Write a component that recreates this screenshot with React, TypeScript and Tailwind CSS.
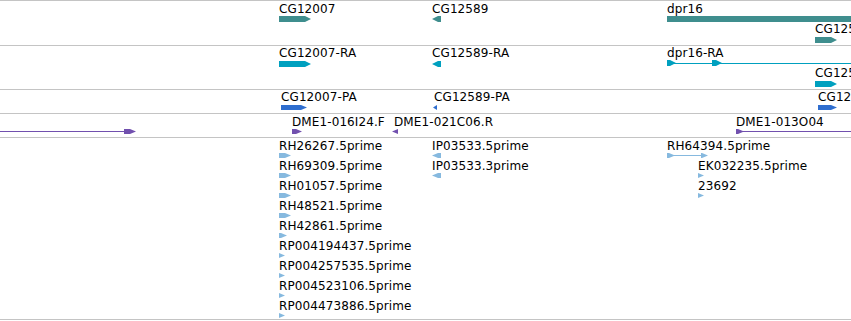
import React from 'react';

type Dir = 'right' | 'left' | 'none';

interface Block {
    x: number;
    w: number;
    dir: Dir;
}

interface Feature {
    label?: string;
    lx?: number;
    baseline?: number;
    y: number;
    h: number;
    color: string;
    blocks: Block[];
    line?: [number, number];
}

interface Track {
    top: number;
    heightClass: string;
    features: Feature[];
}

const TEAL = '#3f8e8e';
const CYAN = '#00a0bf';
const BLUE = '#2f6ecf';
const PURPLE = '#7150ae';
const EST = '#86b9df';

// polygon for one exon block, with an arrow tip on the strand side
function shape(b: Block, h: number) {
    const t = Math.min(6, b.w);
    if (b.dir === 'right') {
        return `${b.x},0 ${b.x + b.w - t},0 ${b.x + b.w},${h / 2} ${b.x + b.w - t},${h} ${b.x},${h}`;
    }
    if (b.dir === 'left') {
        return `${b.x + t},0 ${b.x + b.w},0 ${b.x + b.w},${h} ${b.x + t},${h} ${b.x},${h / 2}`;
    }
    return `${b.x},0 ${b.x + b.w},0 ${b.x + b.w},${h} ${b.x},${h}`;
}

const estRows = (
    x: number,
    names: string[],
    widths: number[],
    dir: Dir,
    start = 0
): Feature[] =>
    names.map((name, i) => ({
        label: name,
        lx: x,
        baseline: 150 + (start + i) * 20,
        y: 153 + (start + i) * 20,
        h: 5,
        color: EST,
        blocks: [{ x, w: widths[i], dir }],
    }));

const TRACKS: Track[] = [
    {
        top: 1,
        heightClass: 'h-[45px]',
        features: [
            { label: 'CG12007', lx: 279, baseline: 13, y: 16, h: 6, color: TEAL, blocks: [{ x: 279, w: 32, dir: 'right' }] },
            { label: 'CG12589', lx: 432, baseline: 13, y: 16, h: 6, color: TEAL, blocks: [{ x: 432, w: 9, dir: 'left' }] },
            { label: 'dpr16', lx: 667, baseline: 13, y: 16, h: 6, color: TEAL, blocks: [{ x: 667, w: 200, dir: 'none' }] },
            { label: 'CG125', lx: 815, baseline: 33, y: 37, h: 6, color: TEAL, blocks: [{ x: 815, w: 22, dir: 'right' }] },
        ],
    },
    {
        top: 46,
        heightClass: 'h-[44px]',
        features: [
            { label: 'CG12007-RA', lx: 279, baseline: 57, y: 61, h: 6, color: CYAN, blocks: [{ x: 279, w: 32, dir: 'right' }] },
            { label: 'CG12589-RA', lx: 432, baseline: 57, y: 61, h: 6, color: CYAN, blocks: [{ x: 432, w: 9, dir: 'left' }] },
            {
                label: 'dpr16-RA',
                lx: 667,
                baseline: 57,
                y: 60,
                h: 6,
                color: CYAN,
                line: [667, 860],
                blocks: [
                    { x: 667, w: 9, dir: 'right' },
                    { x: 712, w: 10, dir: 'right' },
                ],
            },
            { label: 'CG125', lx: 815, baseline: 77, y: 81, h: 6, color: CYAN, blocks: [{ x: 815, w: 22, dir: 'right' }] },
        ],
    },
    {
        top: 90,
        heightClass: 'h-[24px]',
        features: [
            { label: 'CG12007-PA', lx: 281, baseline: 101, y: 105, h: 5, color: BLUE, blocks: [{ x: 281, w: 26, dir: 'right' }] },
            { label: 'CG12589-PA', lx: 434, baseline: 101, y: 105, h: 5, color: BLUE, blocks: [{ x: 433, w: 4, dir: 'left' }] },
            { label: 'CG12', lx: 818, baseline: 101, y: 105, h: 5, color: BLUE, blocks: [{ x: 818, w: 19, dir: 'right' }] },
        ],
    },
    {
        top: 114,
        heightClass: 'h-[24px]',
        features: [
            { y: 129, h: 5, color: PURPLE, line: [0, 126], blocks: [{ x: 124, w: 12, dir: 'right' }] },
            { label: 'DME1-016I24.F', lx: 292, baseline: 126, y: 129, h: 5, color: PURPLE, blocks: [{ x: 292, w: 10, dir: 'right' }] },
            { label: 'DME1-021C06.R', lx: 394, baseline: 126, y: 129, h: 5, color: PURPLE, blocks: [{ x: 392, w: 6, dir: 'left' }] },
            { label: 'DME1-013O04', lx: 736, baseline: 126, y: 129, h: 5, color: PURPLE, line: [740, 860], blocks: [{ x: 736, w: 8, dir: 'right' }] },
        ],
    },
    {
        top: 138,
        heightClass: 'h-[182px]',
        features: [
            ...estRows(
                279,
                [
                    'RH26267.5prime',
                    'RH69309.5prime',
                    'RH01057.5prime',
                    'RH48521.5prime',
                    'RH42861.5prime',
                    'RP004194437.5prime',
                    'RP004257535.5prime',
                    'RP004523106.5prime',
                    'RP004473886.5prime',
                ],
                [12, 12, 12, 12, 8, 6, 6, 6, 6],
                'right'
            ),
            ...estRows(432, ['IP03533.5prime', 'IP03533.3prime'], [9, 9], 'left'),
            {
                label: 'RH64394.5prime',
                lx: 667,
                baseline: 150,
                y: 153,
                h: 5,
                color: EST,
                line: [667, 706],
                blocks: [
                    { x: 667, w: 8, dir: 'right' },
                    { x: 701, w: 7, dir: 'right' },
                ],
            },
            ...estRows(698, ['EK032235.5prime', '23692'], [6, 6], 'right', 1),
        ],
    },
];

function FeatureView({ f, top }: { f: Feature; top: number }) {
    return (
        <>
            {f.label && (
                <span
                    className="absolute whitespace-nowrap text-[12px] leading-none tracking-[0.1px] text-black"
                    style={{ left: f.lx, top: (f.baseline ?? 0) - 10 - top }}
                >
                    {f.label}
                </span>
            )}
            <svg
                className="absolute left-0"
                width={900}
                height={f.h}
                style={{ top: f.y - top }}
                shapeRendering="crispEdges"
            >
                {f.line && (
                    <rect x={f.line[0]} y={Math.floor(f.h / 2)} width={f.line[1] - f.line[0]} height={1} fill={f.color} />
                )}
                {f.blocks.map((b, i) => (
                    <polygon key={i} points={shape(b, f.h)} fill={f.color} shapeRendering="auto" />
                ))}
            </svg>
        </>
    );
}

export default function App() {
    return (
        <div className="flex flex-col w-[851px] h-[321px] overflow-hidden bg-white border-t border-[#c4c4c4] font-['DejaVu_Sans',Verdana,sans-serif]">
            {TRACKS.map((t, i) => (
                <div key={i} className={`relative w-full shrink-0 border-b border-[#c4c4c4] ${t.heightClass}`}>
                    {t.features.map((f, j) => (
                        <FeatureView key={j} f={f} top={t.top} />
                    ))}
                </div>
            ))}
        </div>
    );
}
